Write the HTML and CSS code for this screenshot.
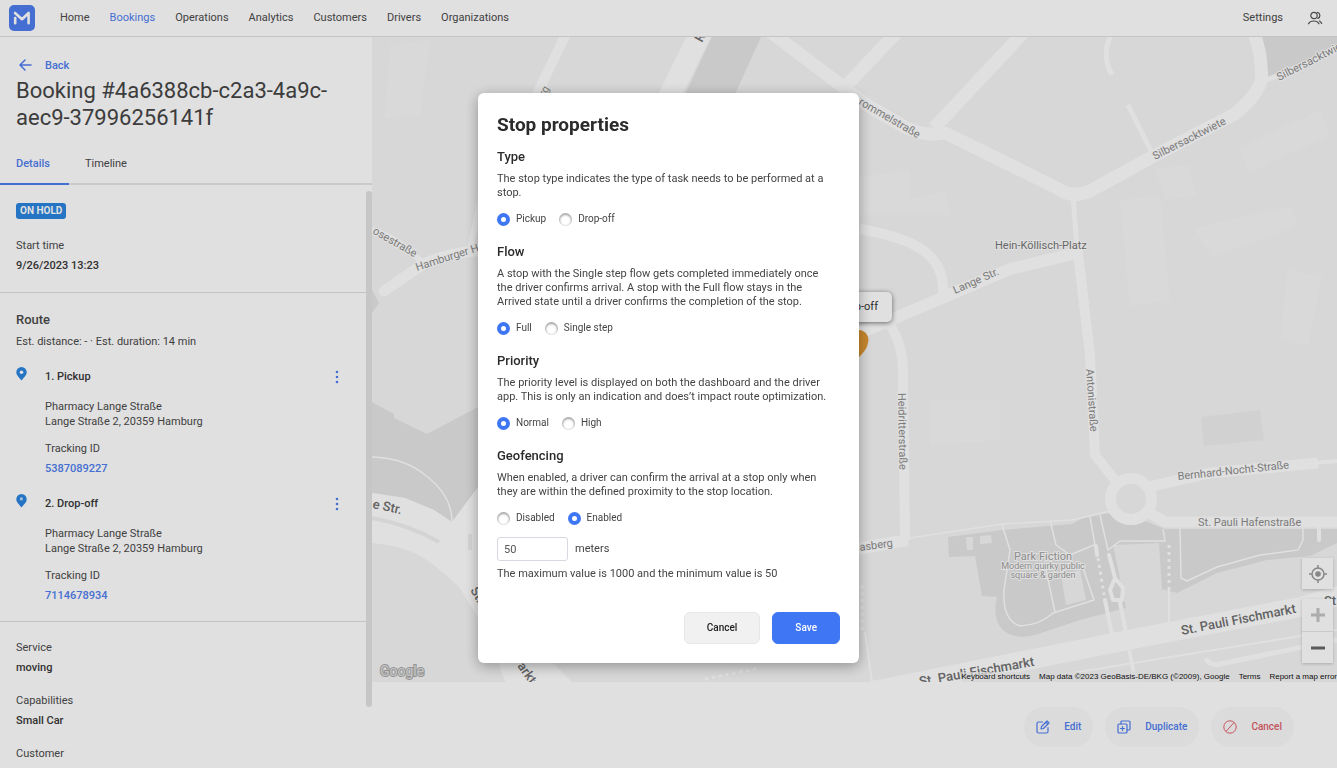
FILE: index.html
```
<!DOCTYPE html>
<html lang="en">
<head>
<meta charset="utf-8">
<title>Booking details</title>
<link rel="stylesheet" href="styles.css">
</head>
<body>
<div class="app">
  <header class="topbar">
    <a class="logo" href="#" aria-label="Dashboard">
      <svg viewBox="0 0 26 26" width="26" height="26"><rect width="26" height="26" rx="5" fill="#4f7ef0"/><path d="M6 8L13 14.200L19.600 8V18.200M6.200 13V18.200" fill="none" stroke="#fff" stroke-width="2.600" stroke-linecap="round" stroke-linejoin="round"/></svg>
    </a>
    <nav class="nav">
      <a href="#">Home</a>
      <a href="#" class="active">Bookings</a>
      <a href="#">Operations</a>
      <a href="#">Analytics</a>
      <a href="#">Customers</a>
      <a href="#">Drivers</a>
      <a href="#">Organizations</a>
    </nav>
    <a href="#" class="settings">Settings</a>
    <button class="icon-btn" aria-label="Account">
      <svg viewBox="0 0 16 16" width="16" height="16" fill="none" stroke="#555" stroke-width="1.200" stroke-linecap="round"><circle cx="7" cy="5.500" r="3.200"/><path d="M1.500 13.800C2.500 11.800 4.500 11 6.800 11S11 11.800 12 13.800M10.500 2.400A3.200 3.200 0 0 1 10.800 8.500M12.500 11C13.500 11.600 14.200 12.400 14.700 13.500"/></svg>
    </button>
  </header>
  <div class="body">
    <aside class="sidebar">
      <div class="head">
        <a class="back" href="#"><svg viewBox="0 0 13 12" width="13" height="12" fill="none" stroke="#4f7ef0" stroke-width="1.500" stroke-linecap="round" stroke-linejoin="round"><path d="M12 6H1M6 1L1 6L6 11"/></svg>Back</a>
        <h1>Booking #4a6388cb-c2a3-4a9c-aec9-37996256141f</h1>
      </div>
      <div class="tabs">
        <button class="tab selected">Details</button>
        <button class="tab">Timeline</button>
      </div>
      <div class="details">
        <section class="block summary">
          <span class="badge">ON HOLD</span>
          <dl class="field"><dt>Start time</dt><dd>9/26/2023 13:23</dd></dl>
        </section>
        <section class="block route">
          <h2>Route</h2>
          <p class="estimate">Est. distance: - · Est. duration: 14 min</p>
          <article class="stop">
            <svg class="pin" viewBox="0 0 11 14" width="11" height="14"><path d="M5.500 0A5.200 5.200 0 0 0 .3 5.200C.3 8.500 3.500 10.500 5.500 13.500C7.500 10.500 10.700 8.500 10.700 5.200A5.200 5.200 0 0 0 5.500 0Z" fill="#2b86e0"/><circle cx="5.500" cy="5.200" r="1.800" fill="#fff"/></svg>
            <div class="stop-body">
              <h3>1. Pickup</h3>
              <p>Pharmacy Lange Straße<br>Lange Straße 2, 20359 Hamburg</p>
              <dl class="field"><dt>Tracking ID</dt><dd><a href="#">5387089227</a></dd></dl>
            </div>
            <button class="icon-btn more" aria-label="Pickup options"><svg viewBox="0 0 4 14" width="4" height="14" fill="#4f7ef0"><circle cx="2" cy="2" r="1.300"/><circle cx="2" cy="7" r="1.300"/><circle cx="2" cy="12" r="1.300"/></svg></button>
          </article>
          <article class="stop">
            <svg class="pin" viewBox="0 0 11 14" width="11" height="14"><path d="M5.500 0A5.200 5.200 0 0 0 .3 5.200C.3 8.500 3.500 10.500 5.500 13.500C7.500 10.500 10.700 8.500 10.700 5.200A5.200 5.200 0 0 0 5.500 0Z" fill="#2b86e0"/><path d="M4 8V3.500H7L6.500 5L7 6.300H4" fill="#fff" fill-opacity=".7"/></svg>
            <div class="stop-body">
              <h3>2. Drop-off</h3>
              <p>Pharmacy Lange Straße<br>Lange Straße 2, 20359 Hamburg</p>
              <dl class="field"><dt>Tracking ID</dt><dd><a href="#">7114678934</a></dd></dl>
            </div>
            <button class="icon-btn more" aria-label="Drop-off options"><svg viewBox="0 0 4 14" width="4" height="14" fill="#4f7ef0"><circle cx="2" cy="2" r="1.300"/><circle cx="2" cy="7" r="1.300"/><circle cx="2" cy="12" r="1.300"/></svg></button>
          </article>
        </section>
        <section class="block facts">
          <dl class="field"><dt>Service</dt><dd>moving</dd></dl>
          <dl class="field"><dt>Capabilities</dt><dd>Small Car</dd></dl>
          <dl class="field"><dt>Customer</dt></dl>
        </section>
        <span class="scroll-thumb"></span>
      </div>
    </aside>
    <main class="main">
      <div class="map">
        <svg class="map-art" viewBox="372 37 965 645" preserveAspectRatio="xMidYMid slice">
          <rect x="372" y="37" width="965" height="645" fill="#f5f5f5"/>
          <g fill="#f7f7f7">
            <path d="M1120 200L1160 196L1170 300L1130 306ZM1194 228L1290 206L1298 225L1212 258ZM1155 168L1188 166L1196 195L1166 200ZM1238 148L1320 110L1330 135L1250 172ZM1288 270L1322 276L1308 346L1280 338ZM390 45L430 40L420 115L385 118ZM860 177L910 170L910 200L945 190L950 215L860 215ZM930 400L1000 400L1000 440L930 445Z"/>
          </g>
          <g fill="#e5e5e5">
            <path d="M712 37H761L730 105H680ZM1260 37H1337V47L1267 78ZM372 290L379 303L372 313ZM372 402L394 414L394 418L427 434L478 407V487L452 522L434 510L405 498L372 493Z"/>
            <path d="M948 537L1002 530L1072 524L1083 518L1110 513L1145 521L1165 529H1337V543L1310 556L1267 560L1217 573L1177 593L1162 589L1159 543L1113 545L1126 608L1080 620L1035 635Q1015 640 1003 630Q992 620 997 597L982 596L975 556L949 557Z"/>
            <path d="M1201 417L1260 410L1264 440L1204 446Z" fill="#eee"/>
          </g>
          <g fill="#f5f5f5"><path d="M966 537H973V550H967ZM980 536L991 535L992 543L980 544ZM1061 575L1080 570L1086 600L1066 605Z"/></g>
          <g fill="none" stroke="#fff" stroke-linejoin="round">
            <path d="M702 30L665 105" stroke-width="22"/>
            <path d="M568 30L534 100" stroke-width="10"/>
            <path d="M768 30L842 86L870 107L905 127Q925 137 945 133L1057 188Q1072 199 1090 191L1150 158L1235 114Q1258 95 1262 78L1260 55L1255 35" stroke-width="13"/>
            <path d="M897 32L846 86M1024 32L934 128" stroke-width="13"/>
            <path d="M1111 35Q1101 55 1112 75M1128 105L1152 153M1073 195L1077 250M1267 80L1337 50" stroke-width="5"/>
            <path d="M1077 245L1090 355L1095 455L1118 484" stroke-width="10"/>
            <path d="M1077 253L1010 269L895 318L860 333M908 540L850 550" stroke-width="12"/>
            <path d="M860 229C905 237 950 250 942 300M890 325Q904 345 903 380L905 540" stroke-width="10"/>
            <circle cx="1131" cy="499" r="20.500" stroke-width="11"/>
            <path d="M1148 487L1210 473L1318 463M1148 512L1165 522H1337" stroke-width="11"/>
            <path d="M1315 463L1337 461M1319 525V540" stroke-width="4" stroke-linecap="round"/>
            <path d="M868 692L1133 639L1300 607L1345 594" stroke-width="20"/>
            <path d="M372 230Q400 238 425 266M470 250L483 190" stroke-width="6"/>
            <path d="M384 291L422 265Q445 253 485 250" stroke-width="11" stroke-linecap="round"/>
            <path d="M372 457Q405 458 425 475Q452 495 452 522" stroke-width="1.500"/>
            <path d="M1002 525L1010 550Q1007 570 1004 590Q1002 620 1020 626Q1040 625 1053 613L1094 600L1082 565M1050 520L1056 545L1070 555L1094 545M1046 570L1055 612M1090 517L1095 545M1100 515L1108 550L1120 541H1165L1163 529M1180 528L1181 578L1187 581L1217 567L1260 555L1298 550L1303 540V528M910 538L1002 524L1072 520L1110 511" stroke-width="1.500"/>
            <path d="M1096 546L1097 555M1105 600L1112 635M1109 555L1115 578L1110 590L1113 600H1122L1123 588L1115 578M1120 602L1137 690" stroke-width="4" stroke-linecap="round"/>
            <path d="M1098 558L1104 595M1169 545V590M862 585V630M705 679L760 668" stroke-width="3" stroke-dasharray="3 4"/>
            <path d="M1169 590V622M1060 675L1337 630M865 632L872 682" stroke-width="2"/>
            <path d="M1206 658Q1208 666 1220 664L1337 640" stroke-width="5"/>
          </g>
          <path d="M372 493L405 498L434 510L452 522L478 487H490V600L580 690H508Q495 650 478 617L459 587Q430 560 415 553Q395 545 372 543Z" fill="#fff"/>
          <path d="M372 518Q410 525 439 542M470 534V550" fill="none" stroke="#f2f2f2" stroke-width="4"/>
          <g class="street">
            <text transform="translate(372 233) rotate(30)">osestraße</text>
            <text transform="translate(417 271) rotate(-18)">Hamburger Ho</text>
            <text transform="translate(545 97) rotate(-62)">rg</text>
            <text transform="translate(858 104) rotate(30)">rommelstraße</text>
            <text transform="translate(1155 160) rotate(-27)">Silbersacktwiete</text>
            <text transform="translate(1279 81) rotate(-27)">Silbersacktwiete</text>
            <text transform="translate(955 294) rotate(-24)">Lange Str.</text>
            <text transform="translate(898 393) rotate(89)">Heidritterstraße</text>
            <text transform="translate(1086 369) rotate(86)">Antonistraße</text>
            <text transform="translate(1178 480) rotate(-6)">Bernhard-Nocht-Straße</text>
            <text x="1198" y="526">St. Pauli Hafenstraße</text>
            <text transform="translate(860 551) rotate(-8)">asberg</text>
          </g>
          <g class="place">
            <text x="995" y="249">Hein-Köllisch-Platz</text>
          </g>
          <g class="park">
            <text x="1043" y="560" class="park-name">Park Fiction</text>
            <text x="1043" y="569">Modern quirky public</text>
            <text x="1043" y="578">square &amp; garden</text>
          </g>
          <g class="road">
            <text transform="translate(1182 635) rotate(-11)">St. Pauli Fischmarkt</text>
            <text transform="translate(920 686) rotate(-10)">St. Pauli Fischmarkt</text>
            <text transform="translate(372 508) rotate(12)">e Str.</text>
            <text transform="translate(470 590) rotate(60)">St.</text>
            <text transform="translate(517 666) rotate(55)">arkt</text>
            <text transform="translate(1324 605)">St.</text>
            <text transform="translate(702 43) rotate(-62)">R</text>
          </g>
          <text class="google" x="380" y="676">Google</text>
          <path d="M859 330A10 10 0 0 1 868 343Q867 350 857 359Z" fill="#e29a33"/>
        </svg>
        <div class="pin-label">Drop-off</div>
        <div class="map-controls">
          <button class="map-btn" aria-label="Locate"><svg viewBox="0 0 18 18" width="18" height="18" fill="none" stroke="#9a9a9a" stroke-width="1.500"><circle cx="9" cy="9" r="6"/><circle cx="9" cy="9" r="2.800" fill="#9a9a9a" stroke="none"/><path d="M9 0V3M9 15V18M0 9H3M15 9H18"/></svg></button>
          <div class="zoom">
            <button class="map-btn" aria-label="Zoom in"><svg viewBox="0 0 16 16" width="16" height="16" stroke="#c4c4c4" stroke-width="3"><path d="M8 1V15M1 8H15"/></svg></button>
            <button class="map-btn" aria-label="Zoom out"><svg viewBox="0 0 16 16" width="16" height="16" stroke="#666" stroke-width="3"><path d="M1 8H15"/></svg></button>
          </div>
        </div>
        <div class="attribution"><a href="#">Keyboard shortcuts</a><span>Map data ©2023 GeoBasis-DE/BKG (©2009), Google</span><a href="#">Terms</a><a href="#">Report a map error</a></div>
      </div>
      <footer class="actions">
        <button class="action"><svg viewBox="0 0 14 14" width="14" height="14" fill="none" stroke="currentColor" stroke-width="1.200" stroke-linecap="round" stroke-linejoin="round"><path d="M6.500 2H2.500Q1 2 1 3.500V11.500Q1 13 2.500 13H10.500Q12 13 12 11.500V7.500M5 9L5.500 6.500L11 1L13 3L7.500 8.500ZM9.800 2.200L11.800 4.200"/></svg>Edit</button>
        <button class="action"><svg viewBox="0 0 14 14" width="14" height="14" fill="none" stroke="currentColor" stroke-width="1.200" stroke-linecap="round" stroke-linejoin="round"><rect x="1" y="4" width="9" height="9" rx="1"/><path d="M4 4V2Q4 1 5 1H12Q13 1 13 2V9Q13 10 12 10H10M5.500 6.500V10.500M3.500 8.500H7.500"/></svg>Duplicate</button>
        <button class="action danger"><svg viewBox="0 0 14 14" width="14" height="14" fill="none" stroke="currentColor" stroke-width="1"><circle cx="7" cy="7" r="6.200"/><path d="M3 11.500L11 2.500"/></svg>Cancel</button>
      </footer>
    </main>
  </div>
</div>
<div class="overlay">
  <form class="modal" role="dialog" aria-labelledby="modal-title">
    <h2 id="modal-title">Stop properties</h2>
    <fieldset>
      <legend>Type</legend>
      <p>The stop type indicates the type of task needs to be performed at a stop.</p>
      <div class="options"><label><input type="radio" name="type" checked>Pickup</label><label><input type="radio" name="type">Drop-off</label></div>
    </fieldset>
    <fieldset>
      <legend>Flow</legend>
      <p>A stop with the Single step flow gets completed immediately once the driver confirms arrival. A stop with the Full flow stays in the Arrived state until a driver confirms the completion of the stop.</p>
      <div class="options"><label><input type="radio" name="flow" checked>Full</label><label><input type="radio" name="flow">Single step</label></div>
    </fieldset>
    <fieldset>
      <legend>Priority</legend>
      <p>The priority level is displayed on both the dashboard and the driver app. This is only an indication and does’t impact route optimization.</p>
      <div class="options"><label><input type="radio" name="priority" checked>Normal</label><label><input type="radio" name="priority">High</label></div>
    </fieldset>
    <fieldset>
      <legend>Geofencing</legend>
      <p>When enabled, a driver can confirm the arrival at a stop only when they are within the defined proximity to the stop location.</p>
      <div class="options"><label><input type="radio" name="geo">Disabled</label><label><input type="radio" name="geo" checked>Enabled</label></div>
      <div class="distance"><input type="text" id="meters" value="50"><label for="meters">meters</label></div>
      <p class="hint">The maximum value is 1000 and the minimum value is 50</p>
    </fieldset>
    <div class="buttons"><button type="button" class="btn">Cancel</button><button type="submit" class="btn primary">Save</button></div>
  </form>
</div>
</body>
</html>
```
FILE: styles.css
```
* { box-sizing: border-box; }
body, h1, h2, h3, p, dl, dd, fieldset { margin: 0; }
body { font: 11px/14px Roboto, "Noto Sans", sans-serif; color: #4a4a4a; background: #fff; }
a { color: inherit; text-decoration: none; }
button { font: inherit; color: inherit; border: 0; background: none; padding: 0; }
svg { display: block; flex: none; }

.app { display: flex; flex-direction: column; height: 100vh; overflow: hidden; }
.topbar { display: flex; align-items: center; height: 37px; flex: none; padding: 0 14px 0 9px; border-bottom: 1px solid #e0e0e0; }
.nav { display: flex; gap: 20px; margin-left: 25px; flex: 1; }
.nav .active { color: #4f7ef0; }
.settings { margin-right: 24px; }

.body { display: flex; flex: 1; min-height: 0; }
.sidebar { display: flex; flex-direction: column; width: 372px; flex: none; line-height: 15px; }
.head { padding: 20px 16px 0; }
.back { display: flex; align-items: center; gap: 13px; padding-left: 3px; height: 16px; color: #4f7ef0; font-weight: 500; }
h1 { font-size: 22px; line-height: 27px; font-weight: 400; margin-top: 4px; color: #454545; }
.tabs { display: flex; margin-top: 12px; border-bottom: 2px solid #e6e6e6; }
.tab { height: 42px; padding: 0 19px 0 16px; margin-bottom: -2px; border-bottom: 2px solid transparent; }
.tab.selected { color: #4f7ef0; border-color: #4f7ef0; font-weight: 500; }
.details { flex: 1; min-height: 0; overflow: hidden; position: relative; }
.scroll-thumb { position: absolute; top: 6px; right: 0; width: 6px; height: 516px; border-radius: 3px; background: #e2e2e2; }
.block { padding: 0 16px; border-bottom: 1px solid #dedede; margin-right: 6px; }
.summary { padding-top: 18px; padding-bottom: 19px; }
.badge { display: inline-block; padding: 0 4px; border-radius: 3px; line-height: 16px; background: #2b86e0; color: #fff; font-size: 10px; font-weight: 700; }
.summary .field { margin-top: 19px; }
.field dd { margin-top: 5px; font-weight: 500; color: #383838; }
.field dd a { color: #4f7ef0; }
.route { padding-top: 18px; padding-bottom: 18px; }
.route h2 { font-size: 13px; line-height: 18px; font-weight: 500; }
.estimate { margin-top: 5px; }
.stop { display: flex; align-items: flex-start; margin-top: 20px; }
.pin { margin-top: -2px; }
.stop-body { flex: 1; margin-left: 18px; }
.stop h3 { font-size: 11px; line-height: 16px; font-weight: 500; color: #383838; margin-bottom: 14px; }
.stop .field { margin-top: 12px; }
.more { padding: 1px 11px 0; }
.facts { padding-top: 18px; border: 0; }
.facts .field { margin-bottom: 18px; }

.main { flex: 1; min-width: 0; display: flex; flex-direction: column; }
.map { flex: 1; min-height: 0; position: relative; overflow: hidden; }
.map-art { width: 100%; height: 100%; }
.map text { paint-order: stroke; stroke: #fff; stroke-width: 2px; }
.street { font-size: 11px; fill: #8d8d8d; }
.place { font-size: 11px; fill: #757575; }
.park { font-size: 9px; fill: #9e9e9e; text-anchor: middle; }
.park-name { font-size: 11px; }
.road { font-size: 13px; font-weight: 500; fill: #707070; }
.map .google { font-size: 14px; fill: #e0e0e0; stroke: #a8a8a8; }
.pin-label { position: absolute; right: 445px; top: 255px; padding: 8px 14px; border-radius: 5px; background: #fff; box-shadow: 0 1px 5px #0008; color: #333; }
.map-controls { position: absolute; right: 4px; bottom: 19px; display: grid; gap: 10px; }
.map-btn { display: grid; place-items: center; width: 31px; height: 31px; background: #fff; box-shadow: 0 1px 3px #0003; }
.zoom { background: #fff; box-shadow: 0 1px 3px #0003; }
.zoom .map-btn { height: 32px; box-shadow: none; }
.zoom .map-btn + .map-btn { border-top: 1px solid #e6e6e6; }
.attribution { position: absolute; right: 0; bottom: 0; display: flex; gap: 9px; font: 8px/10px "Liberation Sans", sans-serif; color: #111; background: #f5f5f5b0; }
.actions { display: flex; justify-content: flex-end; align-items: center; gap: 12px; height: 86px; padding: 4px 43px 0 0; }
.action { display: flex; align-items: center; gap: 14px; height: 40px; padding: 0 12px; border-radius: 20px; background: #fafafa; color: #4f7ef0; font-size: 10px; font-weight: 500; }
.danger { color: #e0606a; }

.overlay { position: fixed; inset: 0; display: flex; align-items: center; justify-content: center; padding-bottom: 12px; background: rgba(0, 0, 0, .12); }
.modal { width: 381px; padding: 20px 19px 19px; border-radius: 6px; background: #fff; box-shadow: 0 3px 14px #0005; color: #444; }
.modal h2 { font-size: 19px; line-height: 24px; font-weight: 700; color: #2b2b2b; margin-bottom: 11px; }
fieldset { border: 0; padding: 0; min-width: 0; }
fieldset + fieldset { margin-top: 17px; }
fieldset p { padding-right: 8px; }
legend { padding: 0; font-size: 13px; line-height: 18px; font-weight: 500; color: #2b2b2b; margin-bottom: 6px; }
.options { display: flex; gap: 13px; margin-top: 12px; font-size: 10px; }
.options label { display: flex; align-items: center; gap: 6px; }
input[type=radio] { appearance: none; width: 13px; height: 13px; margin: 0; border-radius: 50%; background: #fff; box-shadow: inset 0 1px 2px 1px #aaa; }
input[type=radio]:checked { border: 4px solid #3e76f3; box-shadow: none; }
.distance { display: flex; align-items: center; gap: 7px; margin-top: 12px; }
.distance input { width: 71px; height: 24px; padding: 0 6px; border: 1px solid #d8d8e0; border-radius: 3px; font: inherit; color: #555; }
.hint { margin-top: 6px; }
.buttons { display: flex; justify-content: flex-end; gap: 12px; margin-top: 31px; }
.btn { height: 32px; padding: 0 22px; border: 1px solid #e6e6e6; border-radius: 6px; background: #f1f1f1; font-size: 10px; font-weight: 500; color: #222; }
.btn.primary { background: #3e76f3; border-color: #3e76f3; color: #fff; }
```
